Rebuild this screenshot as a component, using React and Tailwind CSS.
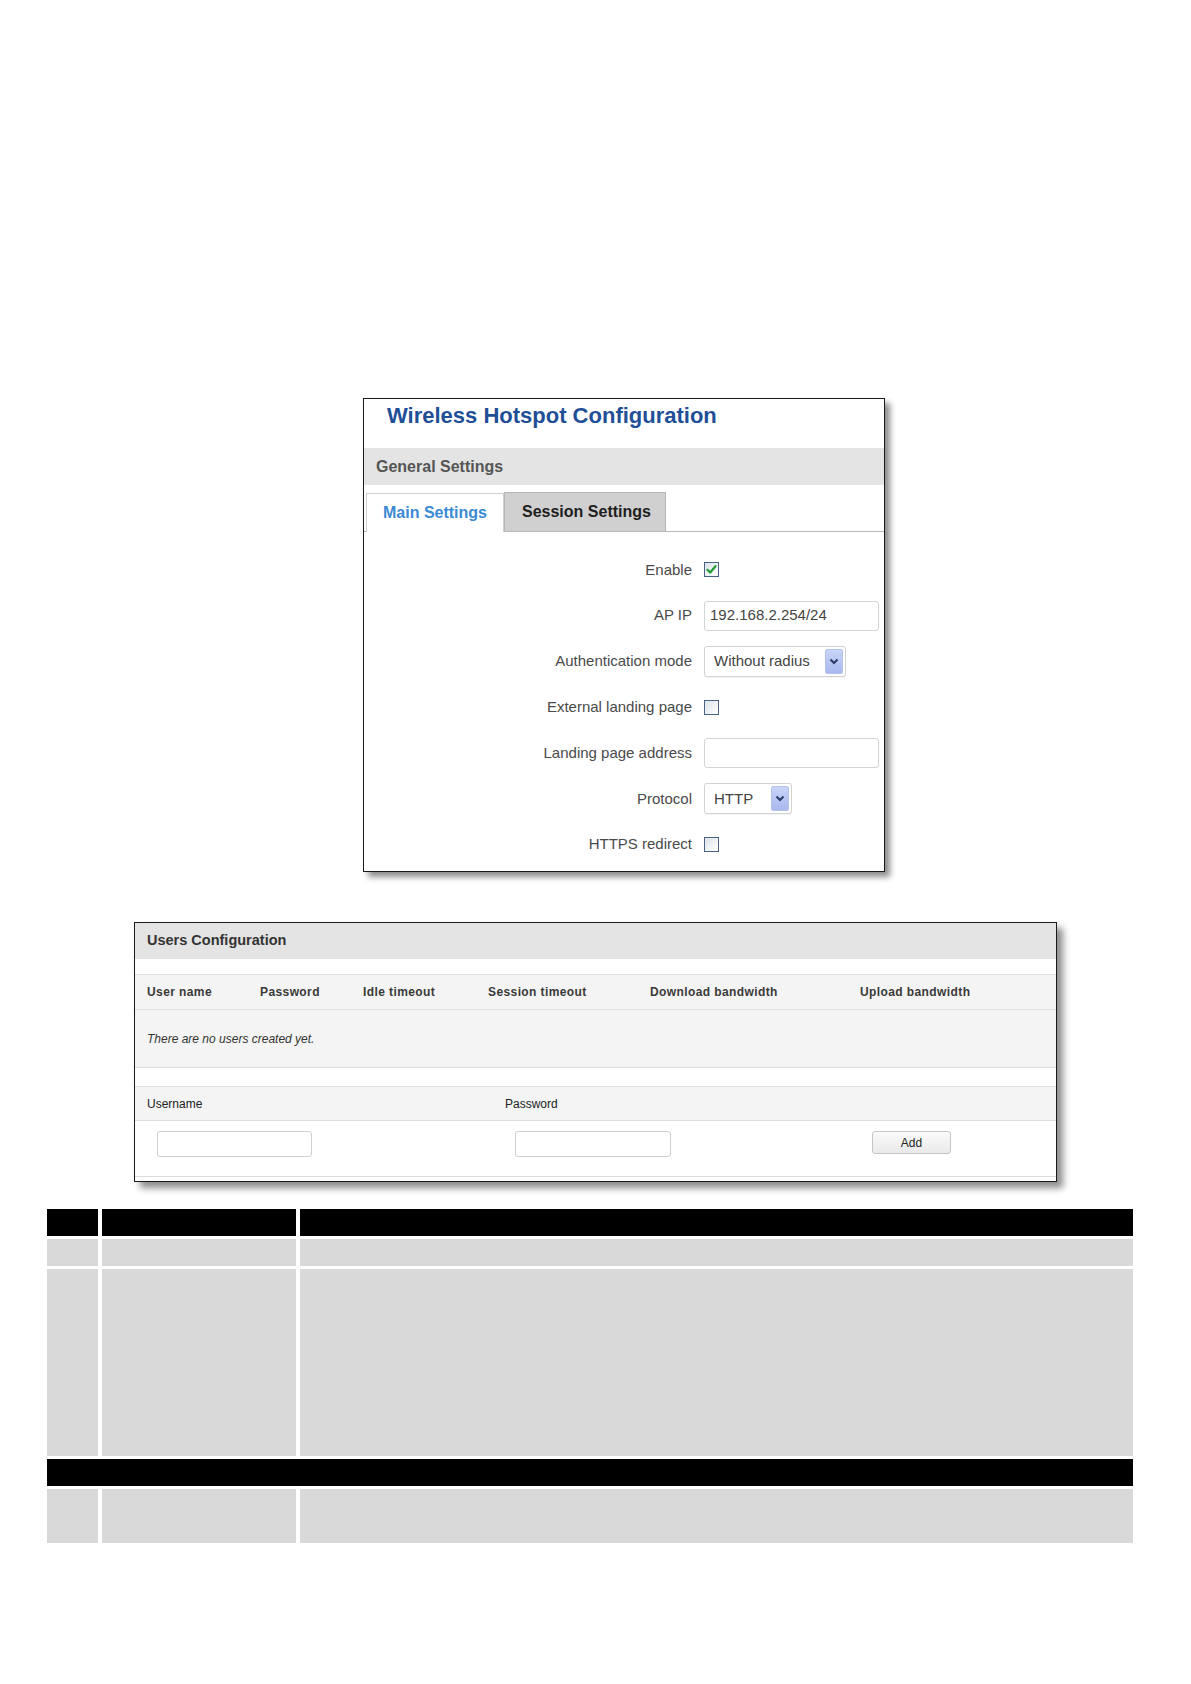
import React from 'react';

const Checkbox = ({ checked }) => (
  <div className="w-[15px] h-[15px] border border-[#4a6283] bg-gradient-to-br from-[#dde3ea] to-[#ffffff] flex items-center justify-center">
    {checked && (
      <svg width="11" height="11" viewBox="0 0 11 11">
        <path d="M1.5 5.8 L4.2 8.5 L9.5 2.2" fill="none" stroke="#1f9a2e" strokeWidth="2.2" strokeLinecap="round" strokeLinejoin="round" />
      </svg>
    )}
  </div>
);

const Select = ({ value, width }) => (
  <div
    className={`h-[31px] border border-[#d2d2d2] rounded-[3px] bg-white flex items-center justify-between pl-[9px] pr-[2px] shadow-[0_1px_1px_rgba(0,0,0,0.05)] ${width}`}
  >
    <span className="text-[15px] text-[#444]">{value}</span>
    <div className="w-[18px] h-[25px] rounded-[2px] bg-gradient-to-b from-[#c9d5f6] to-[#a7b8ee] border border-[#b3c1ec] flex items-center justify-center">
      <svg width="10" height="7" viewBox="0 0 10 7">
        <path d="M1.5 1.5 L5 5 L8.5 1.5" fill="none" stroke="#2b3b68" strokeWidth="2" />
      </svg>
    </div>
  </div>
);

const TextInput = ({ value }) => (
  <div className="w-[175px] h-[30px] border border-[#d4d4d4] rounded-[3px] bg-white flex items-center pl-[5px] text-[15px] text-[#444]">
    {value}
  </div>
);

const Row = ({ label, children }) => (
  <div className="h-[45.8px] flex items-center">
    <div className="w-[328px] text-right text-[15px] text-[#4a4a4a]">{label}</div>
    <div className="ml-[12px]">{children}</div>
  </div>
);

export default function App() {
  return (
    <div className="w-[1191px] h-[1684px] bg-white font-['Liberation_Sans',Arial,sans-serif] pt-[398px]">
      {/* Hotspot box */}
      <div className="ml-[363px] w-[522px] h-[474px] border border-[#1a1a1a] bg-white shadow-[5px_5px_6px_rgba(0,0,0,0.45)]">
        <div className="h-[49px] pl-[23px] pt-[3px]">
          <span className="text-[22px] font-bold text-[#1f4f97] leading-[28px]">Wireless Hotspot Configuration</span>
        </div>
        <div className="h-[37px] bg-[#e4e4e4] pl-[12px] flex items-center">
          <span className="text-[16px] font-bold text-[#555]">General Settings</span>
        </div>
        <div className="mt-[8px] h-[39px] flex items-end border-b border-[#b8b8b8] pl-[2px]">
          <div className="h-[39px] w-[138px] bg-white border border-[#cfcfcf] border-b-0 -mb-px pl-[16px] flex items-center">
            <span className="text-[16px] font-bold text-[#3b8ad4]">Main Settings</span>
          </div>
          <div className="h-[39px] w-[162px] bg-[#d0d0d0] border border-[#b5b5b5] border-b-0 pl-[17px] flex items-center">
            <span className="text-[16px] font-bold text-[#1e1e1e]">Session Settings</span>
          </div>
        </div>
        <div className="pt-[15px]">
          <Row label="Enable"><Checkbox checked /></Row>
          <Row label="AP IP"><TextInput value="192.168.2.254/24" /></Row>
          <Row label="Authentication mode"><Select value="Without radius" width="w-[142px]" /></Row>
          <Row label="External landing page"><Checkbox /></Row>
          <Row label="Landing page address"><TextInput value="" /></Row>
          <Row label="Protocol"><Select value="HTTP" width="w-[88px]" /></Row>
          <Row label="HTTPS redirect"><Checkbox /></Row>
        </div>
      </div>

      {/* Users box */}
      <div className="mt-[50px] ml-[134px] w-[923px] h-[260px] border border-[#1a1a1a] bg-white shadow-[6px_6px_7px_rgba(0,0,0,0.45)]">
        <div className="h-[36px] bg-[#e4e4e4] pl-[12px] flex items-center">
          <span className="text-[14.5px] font-bold text-[#333]">Users Configuration</span>
        </div>
        <div className="mt-[15px] h-[36px] bg-[#f4f4f4] border-y border-[#e0e0e0] flex items-center pl-[12px] text-[12px] font-bold text-[#3a3a3a] tracking-[0.4px]">
          <span className="w-[113px]">User name</span>
          <span className="w-[103px]">Password</span>
          <span className="w-[125px]">Idle timeout</span>
          <span className="w-[162px]">Session timeout</span>
          <span className="w-[210px]">Download bandwidth</span>
          <span>Upload bandwidth</span>
        </div>
        <div className="h-[58px] bg-[#f4f4f4] border-b border-[#dcdcdc] flex items-center pl-[12px]">
          <span className="text-[12px] italic text-[#333]">There are no users created yet.</span>
        </div>
        <div className="mt-[18px] h-[35px] bg-[#f4f4f4] border-y border-[#e0e0e0] flex items-center pl-[12px] text-[12px] text-[#222]">
          <span className="w-[358px]">Username</span>
          <span>Password</span>
        </div>
        <div className="h-[56px] border-b border-[#dcdcdc] flex items-start pt-[10px] pl-[22px]">
          <div className="w-[155px] h-[26px] border border-[#cfcfcf] rounded-[3px] bg-white" />
          <div className="ml-[203px] w-[156px] h-[26px] border border-[#cfcfcf] rounded-[3px] bg-white" />
          <div className="ml-[201px] w-[79px] h-[23px] border border-[#c4c4c4] rounded-[3px] bg-gradient-to-b from-[#fbfbfb] to-[#e9e9e9] flex items-center justify-center text-[12px] text-[#222]">
            Add
          </div>
        </div>
      </div>

      {/* Parameter table */}
      <div className="mt-[27px] ml-[47px] w-[1086px] grid grid-cols-[51px_194px_833px] gap-x-[4px] gap-y-[3px]">
        <div className="h-[27px] bg-black" />
        <div className="h-[27px] bg-black" />
        <div className="h-[27px] bg-black" />
        <div className="h-[27px] bg-[#d9d9d9]" />
        <div className="h-[27px] bg-[#d9d9d9]" />
        <div className="h-[27px] bg-[#d9d9d9]" />
        <div className="h-[187px] bg-[#d9d9d9]" />
        <div className="h-[187px] bg-[#d9d9d9]" />
        <div className="h-[187px] bg-[#d9d9d9]" />
        <div className="col-span-3 h-[27px] bg-black" />
        <div className="h-[54px] bg-[#d9d9d9]" />
        <div className="h-[54px] bg-[#d9d9d9]" />
        <div className="h-[54px] bg-[#d9d9d9]" />
      </div>
    </div>
  );
}
